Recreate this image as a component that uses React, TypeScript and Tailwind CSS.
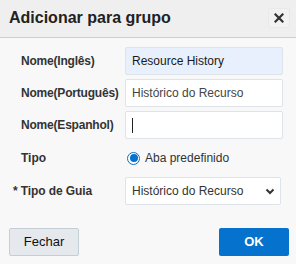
import React from "react";

export default function App() {
  const font = { fontFamily: '"Liberation Sans", Arial, sans-serif' };
  return (
    <div className="w-[296px] h-[264px] bg-[#f8f8f8] flex flex-col overflow-hidden" style={font}>
      <div className="h-[38px] bg-[#efefef] border-b border-[#c4d0da] flex items-center justify-between pl-[9px] pr-[6px] pb-[2px] shrink-0">
        <div className="text-[16px] font-bold text-[#222] leading-none">Adicionar para grupo</div>
        <div className="w-[22px] h-[20px] flex items-center justify-center bg-[#f2f2f2] border border-[#e9e9e9] rounded-[2px]">
          <svg width="10" height="10" viewBox="0 0 10 10">
            <path d="M1.5 1.5 L8.5 8.5 M8.5 1.5 L1.5 8.5" stroke="#333" strokeWidth="2.2" strokeLinecap="square" />
          </svg>
        </div>
      </div>
      <div className="flex flex-col pt-[9px] pl-[13px] flex-1">
        <div className="flex flex-col gap-[4px]">
          <div className="flex items-center h-[28px]">
            <div className="w-[112px] pl-[8px] text-[12px] font-bold text-[#333] tracking-[-0.2px]">Nome(Inglês)</div>
            <div className="w-[158px] h-[28px] bg-[#e8f0fe] border border-[#dde3e8] rounded-[2px] flex items-center pl-[6px] text-[12px] text-[#1a1a1a]">Resource History</div>
          </div>
          <div className="flex items-center h-[28px]">
            <div className="w-[112px] pl-[8px] text-[12px] font-bold text-[#333] whitespace-nowrap tracking-[-0.2px]">Nome(Português)</div>
            <div className="w-[158px] h-[28px] bg-white border border-[#dde3e8] rounded-[2px] flex items-center pl-[6px] text-[12px] text-[#444]">Histórico do Recurso</div>
          </div>
          <div className="flex items-center h-[28px]">
            <div className="w-[112px] pl-[8px] text-[12px] font-bold text-[#333] whitespace-nowrap tracking-[-0.2px]">Nome(Espanhol)</div>
            <div className="w-[158px] h-[28px] bg-white border border-[#dde3e8] rounded-[2px] flex items-center pl-[6px]">
              <div className="w-px h-[15px] bg-[#222]"></div>
            </div>
          </div>
          <div className="flex items-center h-[30px]">
            <div className="w-[112px] pl-[8px] text-[12px] font-bold text-[#333]">Tipo</div>
            <div className="flex items-center pl-[2px]">
              <div className="w-[13px] h-[13px] rounded-full border-[1.5px] border-[#0572ce] flex items-center justify-center bg-white">
                <div className="w-[8px] h-[8px] rounded-full bg-[#0572ce]"></div>
              </div>
              <span className="ml-[5px] text-[12px] text-[#333]">Aba predefinido</span>
            </div>
          </div>
          <div className="flex items-center h-[28px]">
            <div className="w-[112px] text-[12px] font-bold text-[#333] whitespace-nowrap tracking-[-0.1px]">* Tipo de Guia</div>
            <div className="w-[156px] h-[28px] bg-white border border-[#dde3e8] rounded-[2px] flex items-center justify-between pl-[6px] pr-[5px] text-[12px] text-[#333]">
              <span>Histórico do Recurso</span>
              <svg width="10" height="7" viewBox="0 0 10 7">
                <path d="M1.5 1.5 L5 5 L8.5 1.5" stroke="#333" strokeWidth="2" fill="none" />
              </svg>
            </div>
          </div>
        </div>
        <div className="flex justify-between mt-[23px] pr-[7px] -ml-[4px]">
          <button className="w-[70px] h-[28px] bg-[#e5e9ed] border border-[#c4ced7] rounded-[2px] text-[13px] text-[#111]">Fechar</button>
          <button className="w-[70px] h-[28px] bg-[#0572ce] rounded-[2px] text-[13px] font-bold text-white">OK</button>
        </div>
      </div>
    </div>
  );
}
